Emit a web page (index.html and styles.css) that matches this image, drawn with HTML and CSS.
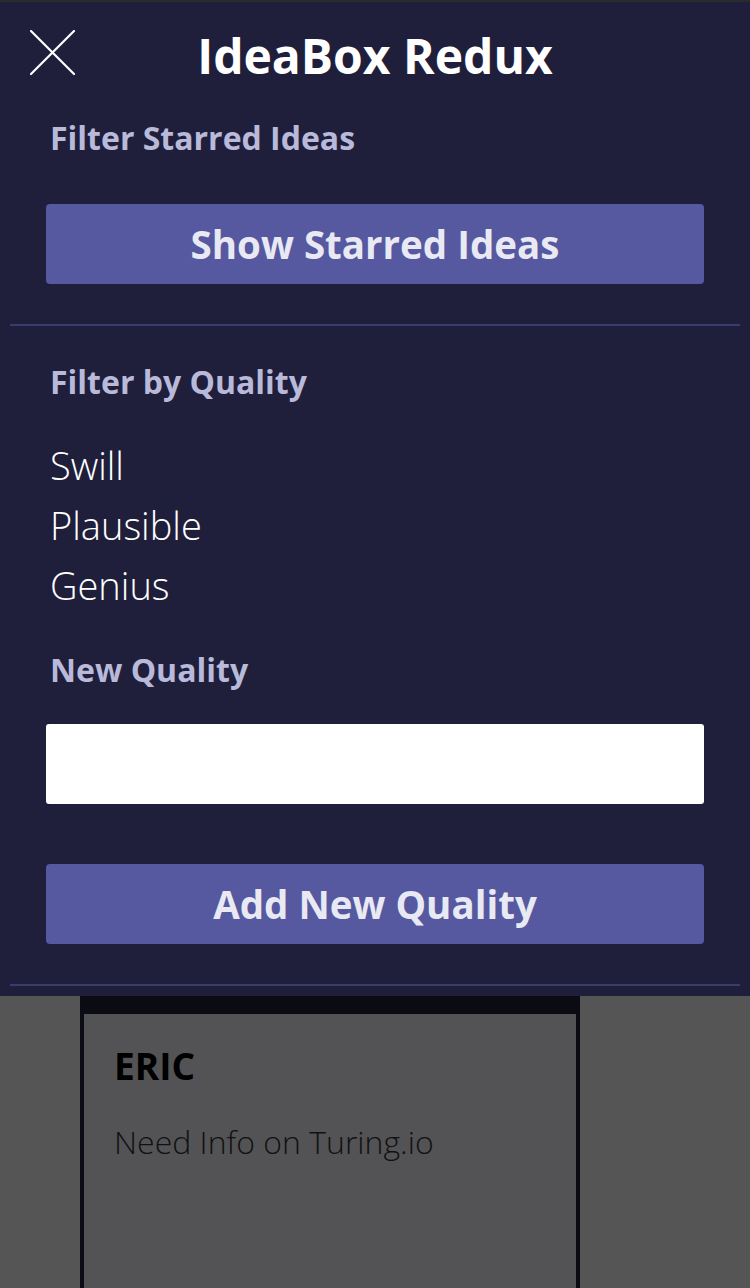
FILE: index.html
```html
<!DOCTYPE html>
<html>
<head>
<meta charset="utf-8">
<link rel="stylesheet" href="styles.css">
</head>
<body>
<nav class="panel">
  <header class="header">
    <svg class="close" width="46" height="46" viewBox="0 0 46 46"><path d="M1 1 L44 44 M44 1 L1 44" stroke="#fff" stroke-width="2.2" stroke-linecap="round" fill="none"/></svg>
    <h1 class="title">IdeaBox Redux</h1>
  </header>
  <section class="section">
    <h2 class="label">Filter Starred Ideas</h2>
    <button class="btn">Show Starred Ideas</button>
  </section>
  <hr class="sep">
  <section class="section">
    <h2 class="label label-q">Filter by Quality</h2>
    <ul class="qualities">
      <li>Swill</li>
      <li>Plausible</li>
      <li>Genius</li>
    </ul>
    <h2 class="label label-new">New Quality</h2>
    <input class="input" type="text">
    <button class="btn btn-add">Add New Quality</button>
  </section>
  <hr class="sep sep-bottom">
</nav>
<main class="main">
  <article class="card">
    <div class="card-inner">
      <h3 class="card-title">ERIC</h3>
      <p class="card-body">Need Info on Turing.io</p>
    </div>
  </article>
</main>
</body>
</html>
```
FILE: styles.css
```css
html, body {
  margin: 0;
  padding: 0;
}
body {
  background: #555555;
  font-family: "Open Sans", "Liberation Sans", sans-serif;
  height: 1288px;
  overflow: hidden;
}
.panel {
  background: #1f1f3c;
  border-top: 2px solid #2b2b2b;
  padding: 0 10px;
  height: 994px;
  box-sizing: content-box;
}
.header {
  display: flex;
  align-items: center;
  height: 112px;
  position: relative;
}
.close {
  position: absolute;
  left: 20px;
  top: 28px;
}
.title {
  margin: 0 auto;
  color: #ffffff;
  font-weight: 700;
  font-size: 48px;
  line-height: 1;
  transform: translateY(-2px);
}
.section {
  padding: 0 36px;
}
.label {
  margin: 0 0 0 4px;
  color: #b9b9d9;
  font-weight: 700;
  font-size: 32px;
  line-height: 48px;
}
.btn {
  display: block;
  width: 100%;
  height: 80px;
  margin-top: 42px;
  border: none;
  border-radius: 4px;
  background: #5659a0;
  color: #e9e9f4;
  font-family: "Open Sans", "Liberation Sans", sans-serif;
  font-weight: 700;
  font-size: 38.5px;
}
.sep {
  margin: 40px 0 0;
  border: none;
  height: 2px;
  background: #3b3b6e;
}
.label-q {
  margin-top: 32px;
}
.qualities {
  list-style: none;
  margin: 29px 0 0 4px;
  padding: 0;
  color: #ffffff;
  font-weight: 300;
  font-size: 38px;
  line-height: 60px;
}
.label-new {
  margin-top: 31px;
}
.input {
  display: block;
  width: 100%;
  height: 80px;
  margin-top: 30px;
  box-sizing: border-box;
  border: none;
  border-radius: 3px;
  background: #ffffff;
}
.btn-add {
  margin-top: 60px;
}
.sep-bottom {
  margin-top: 40px;
}
.main {
  padding-left: 80px;
}
.card {
  width: 500px;
  box-sizing: border-box;
  background: #0b0b14;
  padding: 18px 4px 0;
  height: 292px;
}
.card-inner {
  background: #535355;
  height: 100%;
  padding: 26px 30px;
  box-sizing: border-box;
}
.card-title {
  margin: 0;
  color: #000;
  font-weight: 700;
  font-size: 37px;
  line-height: 52px;
}
.card-body {
  margin: 27px 0 0;
  color: #111;
  font-weight: 300;
  font-size: 32px;
  line-height: 46px;
}
```
